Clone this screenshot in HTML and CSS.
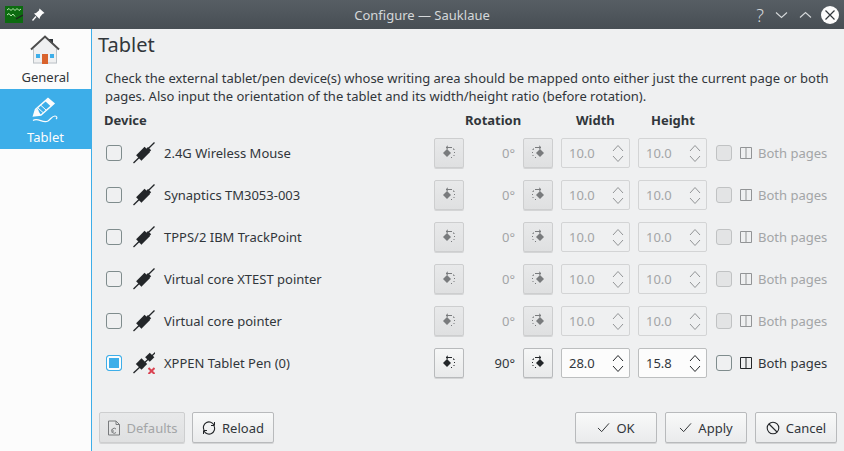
FILE: index.html
```html
<!DOCTYPE html>
<html lang="en">
<head>
    <meta charset="UTF-8">
    <title>Configure — Sauklaue</title>
    <link rel="stylesheet" href="styles.css">
</head>
<body>
    <svg class="defs" width="0" height="0">
        <symbol id="plug" viewBox="0 0 22 22">
            <path d="M0.5 21 L21.5 0.5" stroke="#232629" stroke-width="1.3" fill="none"/>
            <rect x="4" y="8" width="12" height="7.5" transform="rotate(-45 10 11.75)" fill="#232629"/>
            <rect x="14" y="5.5" width="3" height="4.5" transform="rotate(-45 15.5 7.75)" fill="#232629"/>
        </symbol>
        <symbol id="plug-off" viewBox="0 0 22 22">
            <path d="M0.5 21 L23 0" stroke="#232629" stroke-width="1.3" fill="none"/>
            <rect x="4.5" y="8" width="8" height="8" transform="rotate(-45 8.5 12)" fill="#232629"/>
            <rect x="13.5" y="2" width="6.5" height="6.5" transform="rotate(-45 16.75 5.25)" fill="#232629"/>
            <path d="M15.5 16 L21.5 22 M21.5 16 L15.5 22" stroke="#da4453" stroke-width="2" fill="none"/>
        </symbol>
        <symbol id="rot-left" viewBox="0 0 16 16">
            <path d="M6 4 L10 8 L6 12 L2 8 Z" fill="#232629"/>
            <path d="M11 2.5 H5 M7 0.8 L5 2.5 L7 4.2" stroke="#232629" stroke-width="1" fill="none"/>
            <path d="M12 4 H13 V5 M13.5 7 V8 M13 10 V11 M10 12.5 H11" stroke="#232629" stroke-width="1" fill="none"/>
        </symbol>
        <symbol id="rot-right" viewBox="0 0 16 16">
            <path d="M10 4 L14 8 L10 12 L6 8 Z" fill="#232629"/>
            <path d="M5 2.5 H11 M9 0.8 L11 2.5 L9 4.2" stroke="#232629" stroke-width="1" fill="none"/>
            <path d="M4 4 H3 V5 M2.5 7 V8 M3 10 V11 M6 12.5 H5" stroke="#232629" stroke-width="1" fill="none"/>
        </symbol>
        <symbol id="pages" viewBox="0 0 12 12">
            <path d="M0.5 0.5 H11.5 V11.5 H0.5 Z M6 0.5 V11.5" stroke="#232629" fill="none"/>
        </symbol>
        <symbol id="up" viewBox="0 0 12 8">
            <path d="M1 7 L6 1.5 L11 7" stroke="#232629" fill="none"/>
        </symbol>
        <symbol id="down" viewBox="0 0 12 8">
            <path d="M1 1 L6 6.5 L11 1" stroke="#232629" fill="none"/>
        </symbol>
        <symbol id="check" viewBox="0 0 14 12">
            <path d="M1 6.5 L5 10.5 L13 1.5" stroke="#232629" fill="none"/>
        </symbol>
    </svg>

    <div class="titlebar">
        <div class="title-left">
            <svg class="app-icon" width="18" height="17" viewBox="0 0 18 17">
                <rect width="18" height="17" fill="#0c6b10"/>
                <path d="M2 4 L4 2.5 L6 4.5 L8 2.5 L10 4.5 L12 2.5 L14 4.5 L16 3" stroke="#b9e8b0" fill="none"/>
                <path d="M2 9 L4 7.5 L6 10 L8 8 L10 10.5" stroke="#b9e8b0" fill="none"/>
                <path d="M11 13 L18 9" stroke="#222" stroke-width="1.4"/>
            </svg>
            <svg width="13" height="13" viewBox="0 0 13 13">
                <path d="M7.5 0.5 L12.5 5 L10.5 6 L8 9 L7.5 11 L2 5.5 L4 5 L7 2.5 Z" fill="#fcfcfc"/>
                <path d="M4 8.5 L0.5 12.5" stroke="#fcfcfc" stroke-width="1.4"/>
            </svg>
        </div>
        <div class="title-text">Configure — Sauklaue</div>
        <div class="title-right">
            <span class="help">?</span>
            <svg class="chev-down" width="13" height="8" viewBox="0 0 13 8"><path d="M1 1.5 L6.5 6.5 L12 1.5" stroke="#d5d8da" stroke-width="1.1" fill="none"/></svg>
            <svg width="13" height="8" viewBox="0 0 13 8"><path d="M1 6.5 L6.5 1.5 L12 6.5" stroke="#d5d8da" stroke-width="1.1" fill="none"/></svg>
            <svg width="18" height="18" viewBox="0 0 18 18">
                <circle cx="9" cy="9" r="9" fill="#fcfcfc"/>
                <path d="M4.5 4.5 L13.5 13.5 M13.5 4.5 L4.5 13.5" stroke="#31363b" stroke-width="1.2"/>
            </svg>
        </div>
    </div>

    <div class="window">
        <div class="sidebar">
            <div class="side-item">
                <svg width="32" height="32" viewBox="0 0 32 32">
                    <path d="M3 15 L15 3 L27 15 V29.5 H3 Z" fill="#eff0f1"/>
                    <path d="M3 28.5 H27 V29.5 H3 Z" fill="#bdc3c7"/>
                    <path d="M3.5 15 V29 M26.5 15 V29" stroke="#bdc3c7"/>
                    <path d="M19 5 H23 V10 L19 7 Z" fill="#31363b"/>
                    <path d="M1 15.5 L15 2.5 L29 15.5" stroke="#4d4d4d" stroke-width="2" fill="none"/>
                    <rect x="12" y="20" width="6" height="10" fill="#d9622c"/>
                    <rect x="6" y="20" width="4" height="4" fill="#3daee9"/>
                    <rect x="20" y="20" width="4" height="4" fill="#3daee9"/>
                </svg>
                <span>General</span>
            </div>
            <div class="side-item active">
                <svg width="32" height="32" viewBox="0 0 32 32">
                    <path d="M3.5 22 L5.5 15.5 L18 4.5 L24 9.5 L11 21 Z" fill="none" stroke="#fcfcfc" stroke-width="1.4"/>
                    <path d="M15 7 L18 4.5 L24 9.5 L21 12.5 Z M3.5 22 L5.5 15.5 L8 15 L9 18 L11 21 Z" fill="#fcfcfc"/>
                    <path d="M7.5 13.5 L13 18.5 M10.5 11 L16 16" stroke="#fcfcfc"/>
                    <path d="M3 26.5 C8 23 13 30 18 27 C21 25 22 22 25 22 C27 22 27.5 24 26 25" stroke="#fcfcfc" stroke-width="1.2" fill="none"/>
                </svg>
                <span>Tablet</span>
            </div>
        </div>

        <div class="main">
            <h1>Tablet</h1>
            <p class="intro">Check the external tablet/pen device(s) whose writing area should be mapped onto either just the current page or both pages. Also input the orientation of the tablet and its width/height ratio (before rotation).</p>

            <div class="row head">
                <span class="col-device">Device</span>
                <span class="col-rotation">Rotation</span>
                <span class="col-width">Width</span>
                <span class="col-height">Height</span>
            </div>

            <div class="devices">
                <div class="row off">
                    <span class="check"></span>
                    <svg class="dev-icon"><use href="#plug"/></svg>
                    <span>2.4G Wireless Mouse</span>
                    <span class="btn-icon dis"><svg class="faded"><use href="#rot-left"/></svg></span>
                    <span class="deg">0°</span>
                    <span class="btn-icon dis"><svg class="faded"><use href="#rot-right"/></svg></span>
                    <span class="spin">10.0<span class="arrows"><svg><use href="#up"/></svg><svg><use href="#down"/></svg></span></span>
                    <span class="spin">10.0<span class="arrows"><svg><use href="#up"/></svg><svg><use href="#down"/></svg></span></span>
                    <span class="check"></span>
                    <svg class="page-icon"><use href="#pages"/></svg>
                    <span>Both pages</span>
                </div>
                <div class="row off">
                    <span class="check"></span>
                    <svg class="dev-icon"><use href="#plug"/></svg>
                    <span>Synaptics TM3053-003</span>
                    <span class="btn-icon dis"><svg class="faded"><use href="#rot-left"/></svg></span>
                    <span class="deg">0°</span>
                    <span class="btn-icon dis"><svg class="faded"><use href="#rot-right"/></svg></span>
                    <span class="spin">10.0<span class="arrows"><svg><use href="#up"/></svg><svg><use href="#down"/></svg></span></span>
                    <span class="spin">10.0<span class="arrows"><svg><use href="#up"/></svg><svg><use href="#down"/></svg></span></span>
                    <span class="check"></span>
                    <svg class="page-icon"><use href="#pages"/></svg>
                    <span>Both pages</span>
                </div>
                <div class="row off">
                    <span class="check"></span>
                    <svg class="dev-icon"><use href="#plug"/></svg>
                    <span>TPPS/2 IBM TrackPoint</span>
                    <span class="btn-icon dis"><svg class="faded"><use href="#rot-left"/></svg></span>
                    <span class="deg">0°</span>
                    <span class="btn-icon dis"><svg class="faded"><use href="#rot-right"/></svg></span>
                    <span class="spin">10.0<span class="arrows"><svg><use href="#up"/></svg><svg><use href="#down"/></svg></span></span>
                    <span class="spin">10.0<span class="arrows"><svg><use href="#up"/></svg><svg><use href="#down"/></svg></span></span>
                    <span class="check"></span>
                    <svg class="page-icon"><use href="#pages"/></svg>
                    <span>Both pages</span>
                </div>
                <div class="row off">
                    <span class="check"></span>
                    <svg class="dev-icon"><use href="#plug"/></svg>
                    <span>Virtual core XTEST pointer</span>
                    <span class="btn-icon dis"><svg class="faded"><use href="#rot-left"/></svg></span>
                    <span class="deg">0°</span>
                    <span class="btn-icon dis"><svg class="faded"><use href="#rot-right"/></svg></span>
                    <span class="spin">10.0<span class="arrows"><svg><use href="#up"/></svg><svg><use href="#down"/></svg></span></span>
                    <span class="spin">10.0<span class="arrows"><svg><use href="#up"/></svg><svg><use href="#down"/></svg></span></span>
                    <span class="check"></span>
                    <svg class="page-icon"><use href="#pages"/></svg>
                    <span>Both pages</span>
                </div>
                <div class="row off">
                    <span class="check"></span>
                    <svg class="dev-icon"><use href="#plug"/></svg>
                    <span>Virtual core pointer</span>
                    <span class="btn-icon dis"><svg class="faded"><use href="#rot-left"/></svg></span>
                    <span class="deg">0°</span>
                    <span class="btn-icon dis"><svg class="faded"><use href="#rot-right"/></svg></span>
                    <span class="spin">10.0<span class="arrows"><svg><use href="#up"/></svg><svg><use href="#down"/></svg></span></span>
                    <span class="spin">10.0<span class="arrows"><svg><use href="#up"/></svg><svg><use href="#down"/></svg></span></span>
                    <span class="check"></span>
                    <svg class="page-icon"><use href="#pages"/></svg>
                    <span>Both pages</span>
                </div>
                <div class="row on">
                    <span class="check checked"></span>
                    <svg class="dev-icon"><use href="#plug-off"/></svg>
                    <span>XPPEN Tablet Pen (0)</span>
                    <span class="btn-icon"><svg><use href="#rot-left"/></svg></span>
                    <span class="deg">90°</span>
                    <span class="btn-icon"><svg><use href="#rot-right"/></svg></span>
                    <span class="spin">28.0<span class="arrows"><svg><use href="#up"/></svg><svg><use href="#down"/></svg></span></span>
                    <span class="spin">15.8<span class="arrows"><svg><use href="#up"/></svg><svg><use href="#down"/></svg></span></span>
                    <span class="check"></span>
                    <svg class="page-icon"><use href="#pages"/></svg>
                    <span>Both pages</span>
                </div>
            </div>

            <div class="footer">
                <span class="btn defaults dis">
                    <svg width="14" height="16" viewBox="0 0 14 16" class="faded">
                        <path d="M1.5 1 H9 L12.5 4.5 V15 H1.5 Z M9 1 V4.5 H12.5" stroke="#232629" fill="none"/>
                        <path d="M9 9 A2.5 2.5 0 1 0 9 12.5 M5 9.5 L6.5 11 L5 12.5" stroke="#232629" fill="none"/>
                    </svg>
                    Defaults
                </span>
                <span class="btn reload">
                    <svg width="14" height="14" viewBox="0 0 14 14">
                        <path d="M2 9 A5.5 5.5 0 0 1 12 4 M12 5 A5.5 5.5 0 0 1 2 10" stroke="#232629" stroke-width="1.1" fill="none"/>
                        <path d="M12.5 1 V4.5 H9 M1.5 13 V9.5 H5" stroke="#232629" fill="none"/>
                    </svg>
                    Reload
                </span>
                <span class="spacer"></span>
                <span class="btn ok"><svg class="tick"><use href="#check"/></svg>OK</span>
                <span class="btn"><svg class="tick"><use href="#check"/></svg>Apply</span>
                <span class="btn">
                    <svg width="14" height="14" viewBox="0 0 14 14">
                        <circle cx="7" cy="7" r="5.8" stroke="#232629" stroke-width="1.1" fill="none"/>
                        <path d="M3 3 L11 11" stroke="#232629" stroke-width="1.1"/>
                    </svg>
                    Cancel
                </span>
            </div>
        </div>
    </div>
</body>
</html>
```
FILE: styles.css
```css
* {
    margin: 0;
    padding: 0;
    box-sizing: border-box;
}

body {
    width: 844px;
    height: 451px;
    overflow: hidden;
    font-family: "Noto Sans", sans-serif;
    font-size: 13px;
    color: #31363b;
    background: #eff0f1;
    display: flex;
    flex-direction: column;
}

.defs {
    display: none;
}

.titlebar {
    height: 29px;
    flex: none;
    display: grid;
    grid-template-columns: 1fr auto 1fr;
    align-items: center;
    background: linear-gradient(#575e64, #474e54);
    color: #d5d8da;
    padding: 0 5px;
}

.title-left {
    display: flex;
    align-items: center;
    gap: 9px;
}

.title-text {
    font-size: 13px;
}

.title-right {
    display: flex;
    align-items: center;
    justify-content: flex-end;
    gap: 9px;
}

.help {
    font-size: 18px;
    font-weight: 300;
    line-height: 20px;
    margin-right: 2px;
}

.chev-down {
    margin-right: 2px;
}

.window {
    flex: 1;
    display: flex;
    min-height: 0;
}

.sidebar {
    width: 92px;
    flex: none;
    background: #fcfcfc;
    border-right: 1px solid #3daee9;
}

.side-item {
    height: 60px;
    display: flex;
    flex-direction: column;
    align-items: center;
    padding-top: 5px;
    line-height: 18px;
    color: #31363b;
}

.side-item span {
    margin-top: 2px;
}

.side-item.active {
    background: #3daee9;
    color: #fcfcfc;
}

.main {
    flex: 1;
    display: flex;
    flex-direction: column;
    padding: 2px 7px 8px 6px;
}

h1 {
    font-size: 20px;
    font-weight: 400;
    line-height: 28px;
}

.intro {
    margin: 10px 0 0 7px;
    line-height: 18px;
    width: 730px;
    letter-spacing: -0.015px;
}

.row {
    display: grid;
    grid-template-columns: 27px 31px 270px 30px 59px 38px 77px 78px 24px 18px 1fr;
    align-items: center;
    height: 42px;
    margin-left: 8px;
}

.row.head {
    height: 18px;
    margin-top: 6px;
    font-weight: 700;
    display: block;
    position: relative;
}

.head span {
    position: absolute;
    top: 0;
}

.col-device { left: -2px; }
.col-rotation { left: 359px; }
.col-width { left: 470px; }
.col-height { left: 545px; }

.devices {
    margin-top: 3px;
}

.check {
    width: 16px;
    height: 16px;
    border: 1px solid #7f8c8d;
    border-radius: 3px;
    background: #eff0f1;
    display: block;
}

.check.checked {
    border: 1px solid #3daee9;
    background: #3daee9;
    box-shadow: inset 0 0 0 2px #fcfcfc;
}

.dev-icon {
    width: 22px;
    height: 22px;
}

.btn-icon {
    width: 30px;
    height: 30px;
    display: flex;
    align-items: center;
    justify-content: center;
    border: 1px solid #b8babc;
    border-radius: 2px;
    background: linear-gradient(#f6f7f7, #e8e9ea);
    box-shadow: 0 1px 0 #d4d5d6;
}

.btn-icon svg {
    width: 16px;
    height: 16px;
}

.btn-icon.dis {
    border-color: #cdcecf;
    background: linear-gradient(#e8e9ea, #dfe0e1);
}

.faded {
    opacity: 0.55;
}

.deg {
    text-align: right;
    padding-right: 8px;
}

.spin {
    width: 69px;
    height: 30px;
    display: flex;
    align-items: center;
    justify-content: space-between;
    padding: 0 5px 0 7px;
    background: #fcfcfc;
    border: 1px solid #bcbebf;
    border-radius: 2px;
}

.arrows {
    display: flex;
    flex-direction: column;
    gap: 3px;
}

.arrows svg {
    width: 12px;
    height: 8px;
    display: block;
}

.page-icon {
    width: 12px;
    height: 12px;
}

.off .deg,
.off .spin,
.off .check:nth-last-child(3),
.off .check:nth-last-child(3) ~ span {
    color: #a3a5a7;
}

.off .spin {
    background: #eff0f1;
    border-color: #d3d4d5;
}

.off .arrows svg,
.off .page-icon {
    opacity: 0.45;
}

.off .check:nth-last-child(3) {
    border-color: #c0c2c3;
    background: #e3e4e5;
}

.footer {
    margin: auto 0 0 1px;
    display: flex;
    gap: 8px;
}

.btn {
    width: 82px;
    height: 31px;
    display: flex;
    align-items: center;
    justify-content: center;
    gap: 6px;
    border: 1px solid #b8babc;
    border-radius: 2px;
    background: linear-gradient(#f8f9f9, #eaebec);
    box-shadow: 0 1px 0 #d4d5d6;
}

.btn.defaults {
    width: 86px;
}

.btn.dis {
    color: #a3a5a7;
    border-color: #cdcecf;
    background: linear-gradient(#e8e9ea, #dfe0e1);
}

.reload {
    margin-left: -1px;
}

.spacer {
    flex: 1;
}

.tick {
    width: 13px;
    height: 11px;
}
```
